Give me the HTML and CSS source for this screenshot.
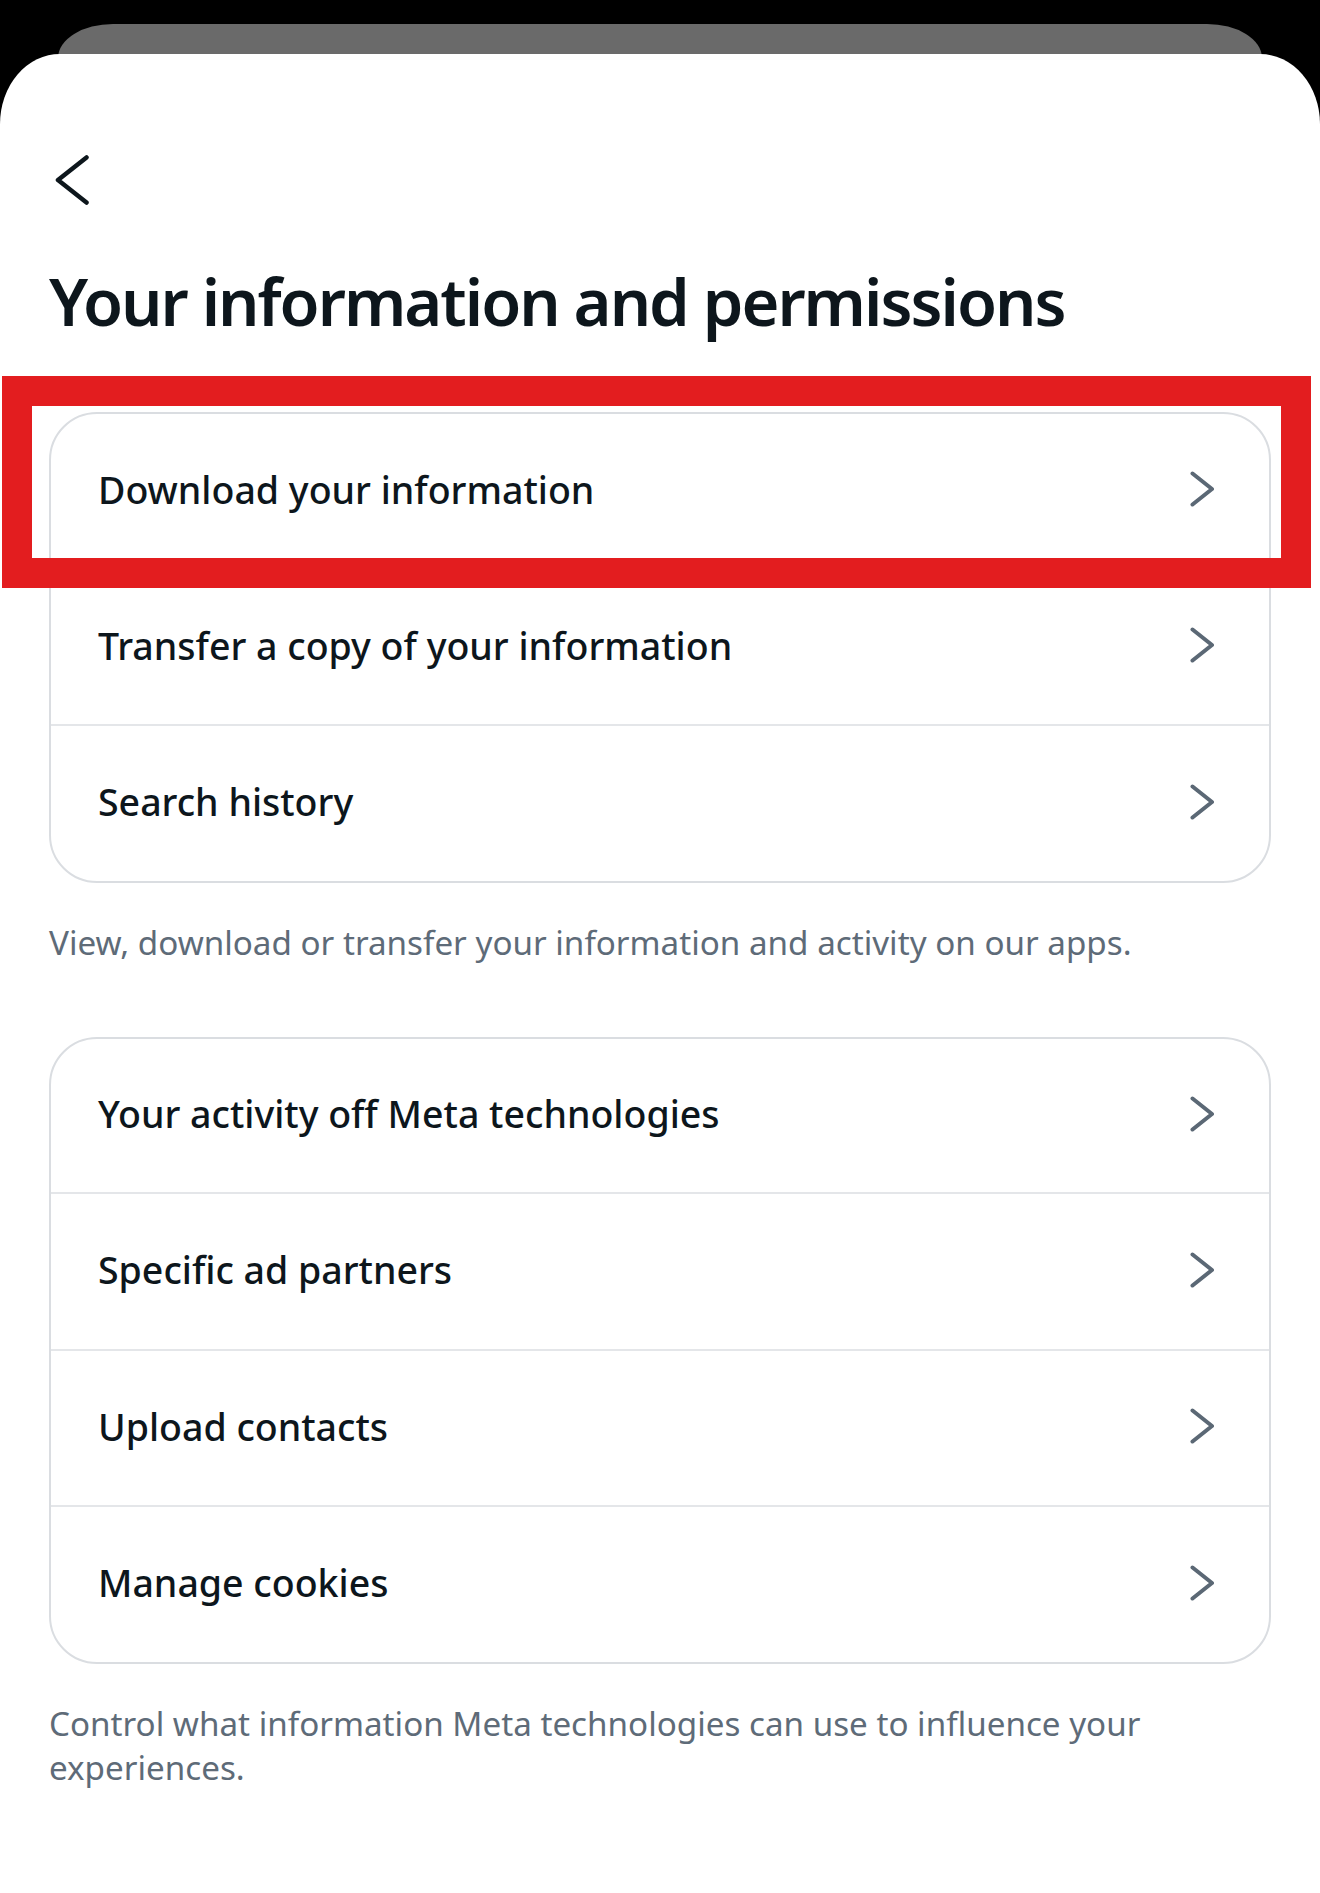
FILE: index.html
```html
<!DOCTYPE html>
<html lang="en">
<head>
<meta charset="utf-8">
<title>Your information and permissions</title>
<link rel="stylesheet" href="styles.css">
</head>
<body>
<div class="backcard"></div>
<main class="sheet">
  <button class="back" aria-label="Back">
    <svg width="34" height="50" viewBox="0 0 34 50"><path d="M31.5 2.5 L3 25 L31.5 47.5" fill="none" stroke="#0d161c" stroke-width="4.5" stroke-linecap="round" stroke-linejoin="round"/></svg>
  </button>
  <h1 class="title">Your information and permissions</h1>

  <section class="group">
    <div class="card">
      <a class="row"><span class="label">Download your information</span><svg class="chev" width="26" height="36" viewBox="0 0 26 36"><path d="M3.5 2.5 L23 18 L3.5 33.5" /></svg></a>
      <a class="row"><span class="label">Transfer a copy of your information</span><svg class="chev" width="26" height="36" viewBox="0 0 26 36"><path d="M3.5 2.5 L23 18 L3.5 33.5" /></svg></a>
      <a class="row"><span class="label">Search history</span><svg class="chev" width="26" height="36" viewBox="0 0 26 36"><path d="M3.5 2.5 L23 18 L3.5 33.5" /></svg></a>
    </div>
    <p class="desc">View, download or transfer your information and activity on our apps.</p>
  </section>

  <section class="group second">
    <div class="card">
      <a class="row"><span class="label">Your activity off Meta technologies</span><svg class="chev" width="26" height="36" viewBox="0 0 26 36"><path d="M3.5 2.5 L23 18 L3.5 33.5" /></svg></a>
      <a class="row"><span class="label">Specific ad partners</span><svg class="chev" width="26" height="36" viewBox="0 0 26 36"><path d="M3.5 2.5 L23 18 L3.5 33.5" /></svg></a>
      <a class="row"><span class="label">Upload contacts</span><svg class="chev" width="26" height="36" viewBox="0 0 26 36"><path d="M3.5 2.5 L23 18 L3.5 33.5" /></svg></a>
      <a class="row"><span class="label">Manage cookies</span><svg class="chev" width="26" height="36" viewBox="0 0 26 36"><path d="M3.5 2.5 L23 18 L3.5 33.5" /></svg></a>
    </div>
    <p class="desc">Control what information Meta technologies can use to influence your experiences.</p>
  </section>

  <div class="highlight" aria-hidden="true"></div>
</main>
</body>
</html>
```
FILE: styles.css
```css
* { box-sizing: border-box; }
html, body { margin: 0; padding: 0; }
body {
  background: #000;
  font-family: "Noto Sans", "Open Sans", sans-serif;
  color: #0d161c;
  min-height: 1893px;
}
.backcard {
  margin: 24px 58px 0;
  height: 130px;
  background: #6a6a6a;
  border-radius: 55px 55px 0 0 / 34px 34px 0 0;
}
.sheet {
  position: relative;
  margin-top: -100px;
  background: #fff;
  border-radius: 60px 60px 0 0 / 70px 70px 0 0;
  min-height: 1839px;
  padding: 101px 49px 40px;
}
.back {
  display: block;
  margin: 0 0 0 6px;
  padding: 0;
  border: 0;
  background: none;
  width: 34px;
  height: 50px;
}
.back svg { display: block; }
.title {
  margin: 57px 0 0;
  font-size: 65px;
  line-height: 78px;
  font-weight: 600;
  letter-spacing: -2px;
  color: #0d161c;
}
.group { margin-top: 72px; }
.group.second { margin-top: 72px; }
.card {
  border: 2px solid #dadde1;
  border-radius: 48px;
  overflow: hidden;
}
.row {
  display: flex;
  align-items: center;
  justify-content: space-between;
  height: 153.5px;
  padding: 0 54px 3px 47px;
  color: #0d161c;
}
.row + .row { border-top: 2px solid #e4e6e9; height: 156.5px; }
.label {
  font-size: 37.5px;
  font-weight: 500;
  line-height: 1.2;
}
.chev { display: block; flex: none; }
.chev path {
  fill: none;
  stroke: #5b6875;
  stroke-width: 4;
  stroke-linecap: round;
  stroke-linejoin: round;
}
.desc {
  margin: 38px 0 0;
  font-size: 33.2px;
  line-height: 44px;
  font-weight: 400;
  color: #5e6b78;
}
.highlight {
  position: absolute;
  left: 2px;
  top: 322px;
  width: 1309px;
  height: 212px;
  border: 30px solid #e31d1f;
  pointer-events: none;
}
```
